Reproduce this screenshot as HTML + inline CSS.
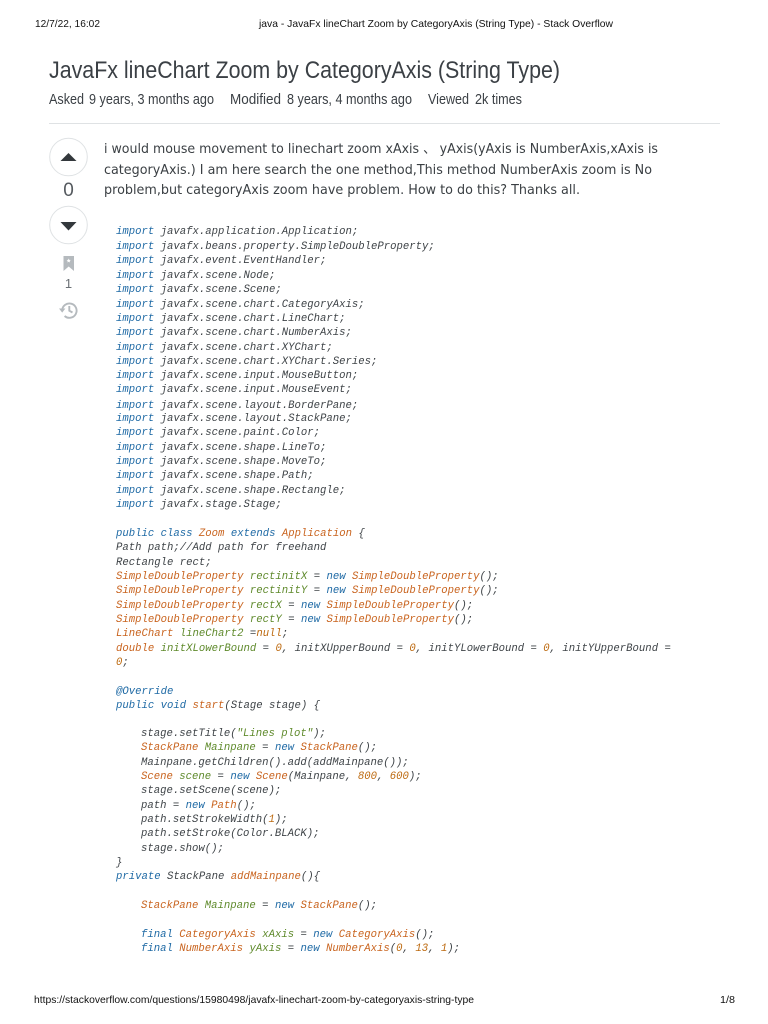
<!DOCTYPE html>
<html lang="en"><head><meta charset="utf-8"><title>java - JavaFx lineChart Zoom by CategoryAxis (String Type) - Stack Overflow</title>
<style>
html,body{margin:0;padding:0;background:#fff}
#p{position:relative;width:768px;height:1024px;overflow:hidden;background:#fff}
svg{position:absolute;left:0;top:0;filter:blur(.3px)}
#c{position:absolute;left:0;top:1px;filter:blur(.3px);font:italic 10.63px/14px "Liberation Mono",monospace;color:#3f4448}
#c div{position:absolute;white-space:pre;height:14px}
.k{color:#1f6aa5}.t{color:#c9641f}.v{color:#5f8a2c}.n{color:#bd6a10}.s{color:#5f8a2c}
</style></head><body><div id="p">
<svg width="768" height="1024" viewBox="0 0 768 1024" xmlns="http://www.w3.org/2000/svg">
<g font-family="Liberation Sans, sans-serif" font-size="10.5" fill="#111">
<text x="35" y="27" textLength="65" lengthAdjust="spacingAndGlyphs">12/7/22, 16:02</text>
<text x="259" y="27" textLength="354" lengthAdjust="spacingAndGlyphs">java - JavaFx lineChart Zoom by CategoryAxis (String Type) - Stack Overflow</text>
<text x="34" y="1003" textLength="440" lengthAdjust="spacingAndGlyphs">https://stackoverflow.com/questions/15980498/javafx-linechart-zoom-by-categoryaxis-string-type</text>
<text x="720" y="1003" textLength="15" lengthAdjust="spacingAndGlyphs">1/8</text>
</g>
<g font-family="Liberation Sans, DejaVu Sans, sans-serif" fill="#3b4045">
<text x="49" y="78" font-size="24" textLength="511" lengthAdjust="spacingAndGlyphs">JavaFx lineChart Zoom by CategoryAxis (String Type)</text>
<g font-size="14.5">
<text x="49" y="104" textLength="35" lengthAdjust="spacingAndGlyphs">Asked</text>
<text x="89" y="104" textLength="125" lengthAdjust="spacingAndGlyphs">9 years, 3 months ago</text>
<text x="230" y="104" textLength="51" lengthAdjust="spacingAndGlyphs">Modified</text>
<text x="287" y="104" textLength="125" lengthAdjust="spacingAndGlyphs">8 years, 4 months ago</text>
<text x="428" y="104" textLength="41" lengthAdjust="spacingAndGlyphs">Viewed</text>
<text x="475" y="104" textLength="47" lengthAdjust="spacingAndGlyphs">2k times</text>
</g>
</g>
<rect x="49" y="123" width="671" height="1" fill="#dfe2e4"/>
<g font-family="DejaVu Sans, 'Noto Sans CJK SC', sans-serif" font-size="13.6" fill="#3a3f43">
<text x="104" y="153" textLength="554" lengthAdjust="spacingAndGlyphs">i would mouse movement to linechart zoom xAxis 、 yAxis(yAxis is NumberAxis,xAxis is</text>
<text x="104" y="174" textLength="548" lengthAdjust="spacingAndGlyphs">categoryAxis.) I am here search the one method,This method NumberAxis zoom is No</text>
<text x="104" y="194" textLength="476" lengthAdjust="spacingAndGlyphs">problem,but categoryAxis zoom have problem. How to do this? Thanks all.</text>
</g>
<circle cx="68.5" cy="157" r="18.8" fill="#fff" stroke="#dfe2e4" stroke-width="1"/>
<path d="M60.5 161L68.5 153L76.5 161Z" fill="#33383c"/>
<circle cx="68.5" cy="225" r="18.8" fill="#fff" stroke="#dfe2e4" stroke-width="1"/>
<path d="M60.5 222L76.5 222L68.5 230.5Z" fill="#33383c"/>
<text x="68.5" y="196" font-family="Liberation Sans, sans-serif" font-size="19" fill="#555a5f" text-anchor="middle">0</text>
<path d="M63.5 256H74V271L68.7 266.5L63.5 271Z" fill="#b5babe"/>
<path d="M68.7 258.5l.6 1.4 1.5.1-1.1 1 .3 1.5-1.3-.8-1.3.8.3-1.5-1.1-1 1.5-.1Z" fill="#fff"/>
<text x="68.5" y="288" font-family="Liberation Sans, sans-serif" font-size="13" fill="#6a7075" text-anchor="middle">1</text>
<g fill="none" stroke="#b5babe" stroke-width="1.9">
<path d="M62.2 310.5A7.2 7.2 0 1 1 64.6 316"/>
<path d="M69.3 306V310.7L72.5 312.5"/>
</g>
<path d="M59 308.5H65.4L62.2 312.6Z" fill="#b5babe"/>
</svg>
<div id="c">
<div style="left:116px;top:224px"><span class="k">import</span> javafx.application.Application;</div>
<div style="left:116px;top:239px"><span class="k">import</span> javafx.beans.property.SimpleDoubleProperty;</div>
<div style="left:116px;top:253px"><span class="k">import</span> javafx.event.EventHandler;</div>
<div style="left:116px;top:268px"><span class="k">import</span> javafx.scene.Node;</div>
<div style="left:116px;top:282px"><span class="k">import</span> javafx.scene.Scene;</div>
<div style="left:116px;top:297px"><span class="k">import</span> javafx.scene.chart.CategoryAxis;</div>
<div style="left:116px;top:311px"><span class="k">import</span> javafx.scene.chart.LineChart;</div>
<div style="left:116px;top:325px"><span class="k">import</span> javafx.scene.chart.NumberAxis;</div>
<div style="left:116px;top:340px"><span class="k">import</span> javafx.scene.chart.XYChart;</div>
<div style="left:116px;top:354px"><span class="k">import</span> javafx.scene.chart.XYChart.Series;</div>
<div style="left:116px;top:368px"><span class="k">import</span> javafx.scene.input.MouseButton;</div>
<div style="left:116px;top:382px"><span class="k">import</span> javafx.scene.input.MouseEvent;</div>
<div style="left:116px;top:398px"><span class="k">import</span> javafx.scene.layout.BorderPane;</div>
<div style="left:116px;top:411px"><span class="k">import</span> javafx.scene.layout.StackPane;</div>
<div style="left:116px;top:425px"><span class="k">import</span> javafx.scene.paint.Color;</div>
<div style="left:116px;top:440px"><span class="k">import</span> javafx.scene.shape.LineTo;</div>
<div style="left:116px;top:454px"><span class="k">import</span> javafx.scene.shape.MoveTo;</div>
<div style="left:116px;top:468px"><span class="k">import</span> javafx.scene.shape.Path;</div>
<div style="left:116px;top:483px"><span class="k">import</span> javafx.scene.shape.Rectangle;</div>
<div style="left:116px;top:497px"><span class="k">import</span> javafx.stage.Stage;</div>
<div style="left:116px;top:526px"><span class="k">public class</span> <span class="t">Zoom</span> <span class="k">extends</span> <span class="t">Application</span> {</div>
<div style="left:116px;top:540px">Path path;//Add path for freehand</div>
<div style="left:116px;top:555px">Rectangle rect;</div>
<div style="left:116px;top:569px"><span class="t">SimpleDoubleProperty</span> <span class="v">rectinitX</span> = <span class="k">new</span> <span class="t">SimpleDoubleProperty</span>();</div>
<div style="left:116px;top:583px"><span class="t">SimpleDoubleProperty</span> <span class="v">rectinitY</span> = <span class="k">new</span> <span class="t">SimpleDoubleProperty</span>();</div>
<div style="left:116px;top:598px"><span class="t">SimpleDoubleProperty</span> <span class="v">rectX</span> = <span class="k">new</span> <span class="t">SimpleDoubleProperty</span>();</div>
<div style="left:116px;top:612px"><span class="t">SimpleDoubleProperty</span> <span class="v">rectY</span> = <span class="k">new</span> <span class="t">SimpleDoubleProperty</span>();</div>
<div style="left:116px;top:626px"><span class="t">LineChart</span> <span class="v">lineChart2</span> =<span class="k" style="color:#bd6a10">null</span>;</div>
<div style="left:116px;top:641px"><span class="t">double</span> <span class="v">initXLowerBound</span> = <span class="n">0</span>, initXUpperBound = <span class="n">0</span>, initYLowerBound = <span class="n">0</span>, initYUpperBound =</div>
<div style="left:116px;top:655px"><span class="n">0</span>;</div>
<div style="left:116px;top:684px"><span class="k">@Override</span></div>
<div style="left:116px;top:698px"><span class="k">public void</span> <span class="t">start</span>(Stage stage) {</div>
<div style="left:141px;top:726px">stage.setTitle(<span class="s">"Lines plot"</span>);</div>
<div style="left:141px;top:740px"><span class="t">StackPane</span> <span class="v">Mainpane</span> = <span class="k">new</span> <span class="t">StackPane</span>();</div>
<div style="left:141px;top:755px">Mainpane.getChildren().add(addMainpane());</div>
<div style="left:141px;top:769px"><span class="t">Scene</span> <span class="v">scene</span> = <span class="k">new</span> <span class="t">Scene</span>(Mainpane, <span class="n">800</span>, <span class="n">600</span>);</div>
<div style="left:141px;top:783px">stage.setScene(scene);</div>
<div style="left:141px;top:798px">path = <span class="k">new</span> <span class="t">Path</span>();</div>
<div style="left:141px;top:812px">path.setStrokeWidth(<span class="n">1</span>);</div>
<div style="left:141px;top:826px">path.setStroke(Color.BLACK);</div>
<div style="left:141px;top:841px">stage.show();</div>
<div style="left:116px;top:855px">}</div>
<div style="left:116px;top:869px"><span class="k">private</span> StackPane <span class="t">addMainpane</span>(){</div>
<div style="left:141px;top:898px"><span class="t">StackPane</span> <span class="v">Mainpane</span> = <span class="k">new</span> <span class="t">StackPane</span>();</div>
<div style="left:141px;top:927px"><span class="k">final</span> <span class="t">CategoryAxis</span> <span class="v">xAxis</span> = <span class="k">new</span> <span class="t">CategoryAxis</span>();</div>
<div style="left:141px;top:941px"><span class="k">final</span> <span class="t">NumberAxis</span> <span class="v">yAxis</span> = <span class="k">new</span> <span class="t">NumberAxis</span>(<span class="n">0</span>, <span class="n">13</span>, <span class="n">1</span>);</div>
</div>
</div></body></html>
